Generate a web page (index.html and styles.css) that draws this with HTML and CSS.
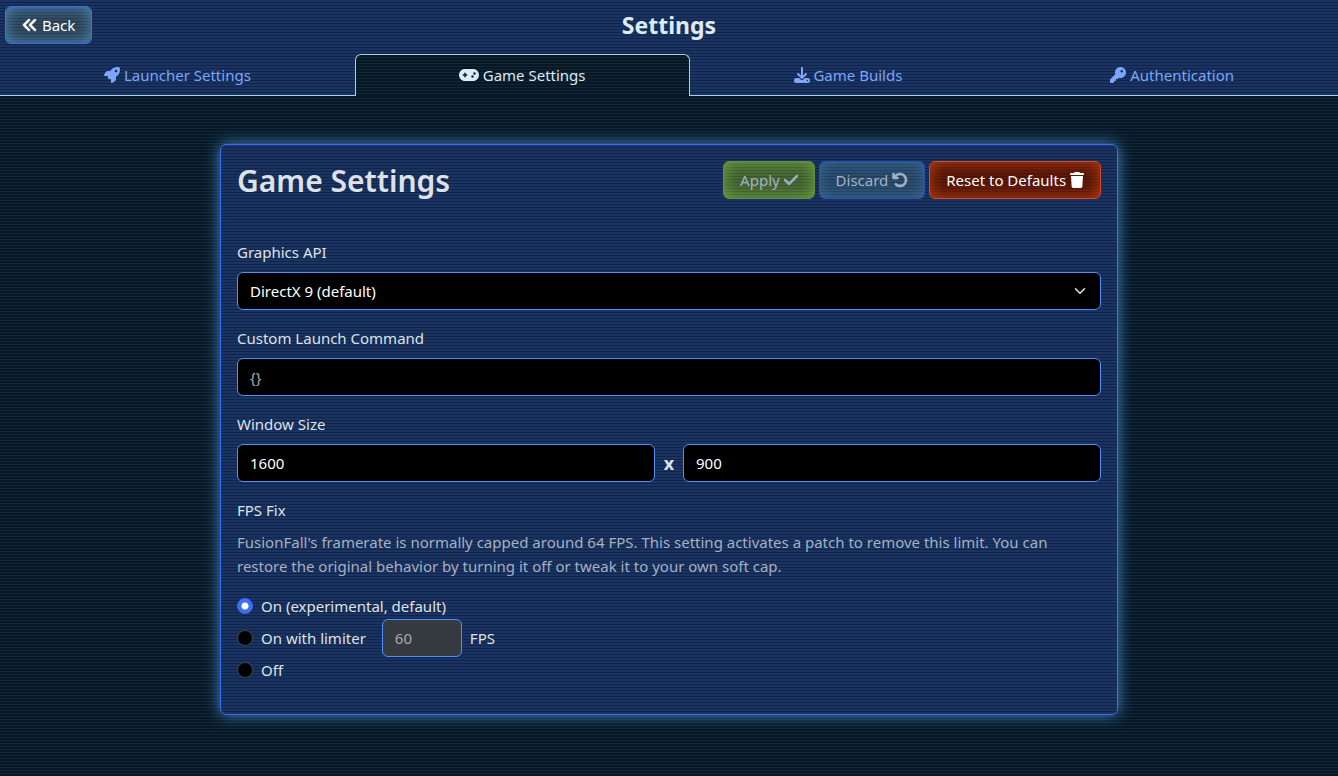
FILE: index.html
```html
<!DOCTYPE html>
<html lang="en">
<head>
<meta charset="utf-8">
<meta name="viewport" content="width=device-width, initial-scale=1">
<title>Settings</title>
<link rel="stylesheet" href="styles.css">
</head>
<body>
<header class="top">
  <div class="titlebar">
    <button class="btn btn-primary" type="button"><svg class="icon icon-bold" viewBox="0 0 512 512" aria-hidden="true"><path d="M41.400 233.400c-12.500 12.500-12.500 32.800 0 45.300l160 160c12.500 12.500 32.800 12.500 45.300 0s12.500-32.800 0-45.300L109.300 256 246.600 118.600c12.500-12.500 12.500-32.800 0-45.300s-32.800-12.500-45.300 0l-160 160zm192 0c-12.500 12.500-12.500 32.800 0 45.300l160 160c12.500 12.500 32.800 12.500 45.300 0s12.500-32.800 0-45.300L301.300 256 438.600 118.600c12.500-12.500 12.500-32.800 0-45.300s-32.800-12.500-45.300 0l-160 160z"/></svg> Back</button>
    <h1 class="page-title">Settings</h1>
  </div>
  <nav class="tabs">
    <a class="tab" href="#launcher"><svg class="icon" viewBox="0 0 512 512" aria-hidden="true"><path fill-rule="evenodd" d="M156.600 384.900 125.700 354c-8.500-8.500-11.500-20.800-7.700-32.200 3-8.900 7-20.500 11.800-33.800H24c-8.600 0-16.600-4.600-20.900-12.100s-4.200-16.700.2-24.100l52.500-88.500c13-21.900 36.500-35.300 61.900-35.300h82.300c2.400-4 4.800-7.700 7.200-11.300C289.100-4.100 411.100-8.100 483.900 5.300c11.600 2.100 20.600 11.200 22.800 22.800 13.400 72.900 9.300 194.800-111.400 276.700-3.500 2.400-7.300 4.800-11.300 7.200v82.300c0 25.400-13.400 49-35.300 61.900l-88.500 52.500c-7.400 4.400-16.600 4.500-24.100.2s-12.100-12.200-12.100-20.900V380.800c-14.100 4.900-26.400 8.900-35.700 11.900-11.200 3.600-23.400.5-31.800-7.800zM384 168a40 40 0 1 0 0-80 40 40 0 1 0 0 80z"/></svg> Launcher Settings</a>
    <a class="tab active" href="#game" aria-current="page"><svg class="icon" viewBox="0 0 640 512" aria-hidden="true"><path fill-rule="evenodd" d="M192 64C86 64 0 150 0 256s86 192 192 192h256c106 0 192-86 192-192S554 64 448 64H192zm304 104a40 40 0 1 1 0 80 40 40 0 1 1 0-80zM392 304a40 40 0 1 1 80 0 40 40 0 1 1-80 0zM168 200c0-13.300 10.700-24 24-24s24 10.700 24 24v32h32c13.300 0 24 10.700 24 24s-10.700 24-24 24h-32v32c0 13.300-10.700 24-24 24s-24-10.700-24-24v-32h-32c-13.300 0-24-10.700-24-24s10.700-24 24-24h32v-32z"/></svg> Game Settings</a>
    <a class="tab" href="#builds"><svg class="icon" viewBox="0 0 512 512" aria-hidden="true"><path fill-rule="evenodd" d="M288 32c0-17.700-14.300-32-32-32s-32 14.300-32 32v242.700l-73.400-73.400c-12.500-12.500-32.800-12.500-45.300 0s-12.500 32.800 0 45.300l128 128c12.500 12.500 32.800 12.500 45.300 0l128-128c12.500-12.500 12.500-32.800 0-45.300s-32.800-12.500-45.300 0L288 274.700V32zM64 352c-35.300 0-64 28.700-64 64v32c0 35.300 28.700 64 64 64h384c35.300 0 64-28.700 64-64v-32c0-35.300-28.700-64-64-64H346.500l-45.300 45.300c-25 25-65.500 25-90.500 0L165.500 352H64zm368 56a24 24 0 1 1 0 48 24 24 0 1 1 0-48z"/></svg> Game Builds</a>
    <a class="tab" href="#auth"><svg class="icon" viewBox="0 0 512 512" aria-hidden="true"><path fill-rule="evenodd" d="M336 352c97.200 0 176-78.800 176-176S433.200 0 336 0 160 78.800 160 176c0 18.700 2.900 36.800 8.300 53.700L7 391c-4.500 4.500-7 10.600-7 17v80c0 13.300 10.700 24 24 24h80c13.300 0 24-10.700 24-24v-40h40c13.300 0 24-10.700 24-24v-40h40c6.400 0 12.500-2.500 17-7l33.300-33.300c16.900 5.400 35 8.300 53.700 8.300zM376 96a40 40 0 1 1 0 80 40 40 0 1 1 0-80z"/></svg> Authentication</a>
  </nav>
</header>
<main class="content">
  <form class="card">
    <div class="card-head">
      <h2 class="card-title">Game Settings</h2>
      <div class="actions">
        <button class="btn btn-success" type="button" disabled>Apply <svg class="icon icon-bold" viewBox="0 0 448 512" aria-hidden="true"><path d="M438.600 105.400c12.500 12.500 12.500 32.800 0 45.300l-256 256c-12.500 12.500-32.800 12.500-45.300 0l-128-128c-12.500-12.500-12.500-32.800 0-45.300s32.800-12.500 45.300 0L160 338.700l233.400-233.300c12.500-12.500 32.800-12.500 45.300 0z"/></svg></button>
        <button class="btn btn-primary" type="button" disabled>Discard <svg class="icon icon-bold" viewBox="0 0 512 512" aria-hidden="true"><path d="M125.700 160H176c17.700 0 32 14.300 32 32s-14.300 32-32 32H48c-17.700 0-32-14.300-32-32V64c0-17.700 14.300-32 32-32s32 14.300 32 32v51.200l17.600-17.600c87.500-87.500 229.300-87.500 316.800 0s87.500 229.300 0 316.800-229.300 87.500-316.800 0c-12.500-12.500-12.500-32.800 0-45.300s32.800-12.500 45.300 0c62.500 62.500 163.800 62.500 226.300 0s62.500-163.800 0-226.300-163.800-62.500-226.300 0L125.700 160z"/></svg></button>
        <button class="btn btn-danger" type="button">Reset to Defaults <svg class="icon" viewBox="0 0 448 512" aria-hidden="true"><path d="M135.200 17.700 128 32H32C14.300 32 0 46.300 0 64s14.300 32 32 32h384c17.700 0 32-14.300 32-32s-14.300-32-32-32h-96l-7.200-14.300C307.400 6.800 296.300 0 284.200 0H163.800c-12.100 0-23.200 6.800-28.600 17.700zM416 128H32l21.200 339c1.600 25.300 22.600 45 47.900 45h245.800c25.300 0 46.300-19.700 47.900-45L416 128z"/></svg></button>
      </div>
    </div>
    <hr class="rule">
    <div class="field">
      <label class="label" for="api">Graphics API</label>
      <select class="control select" id="api"><option>DirectX 9 (default)</option></select>
    </div>
    <div class="field">
      <label class="label" for="command">Custom Launch Command</label>
      <input class="control" id="command" type="text" placeholder="{}">
    </div>
    <div class="field">
      <label class="label" for="width">Window Size</label>
      <div class="size-row">
        <input class="control" id="width" type="text" value="1600">
        <span class="times">x</span>
        <input class="control" type="text" value="900" aria-label="Window height">
      </div>
    </div>
    <fieldset class="group">
      <legend class="label">FPS Fix</legend>
      <p class="hint">FusionFall's framerate is normally capped around 64 FPS. This setting activates a patch to remove this limit. You can restore the original behavior by turning it off or tweak it to your own soft cap.</p>
      <div class="choice"><input class="radio" type="radio" name="fps" id="on" checked><label for="on">On (experimental, default)</label></div>
      <div class="choice"><input class="radio" type="radio" name="fps" id="limit"><label for="limit">On with limiter</label>
        <input class="control limit" id="cap" type="text" value="60" disabled><label for="cap">FPS</label></div>
      <div class="choice"><input class="radio" type="radio" name="fps" id="off"><label for="off">Off</label></div>
    </fieldset>
  </form>
</main>
</body>
</html>
```
FILE: styles.css
```css
* { box-sizing: border-box; }

body {
  margin: 0;
  min-height: 100vh;
  background: repeating-linear-gradient(#081820 0 2px, #10253f 2px 3px);
  color: #dee2e6;
  font: 15px/24px "Noto Sans", "Open Sans", sans-serif;
}

button, input, select { font: inherit; }

.icon {
  width: auto;
  height: 16px;
  fill: currentColor;
  vertical-align: -2px;
}

.icon-bold {
  stroke: currentColor;
  stroke-width: 20px;
}

.top {
  background: repeating-linear-gradient(#193363 0 2px, #122448 2px 3px);
}

.titlebar {
  display: grid;
  grid-template-columns: 1fr auto 1fr;
  align-items: center;
  padding: 6px 5px 10px;
}

.titlebar .btn { justify-self: start; }

.page-title {
  margin: 0;
  color: #dcebf5;
  font-size: 23px;
  font-weight: 700;
  line-height: 32px;
}

.btn {
  height: 38px;
  padding: 0 16px;
  border: 1px solid #3d6df0;
  border-radius: 6px;
  color: #fff;
  white-space: nowrap;
}

.btn-primary {
  background: repeating-linear-gradient(#ffffff08 0 2px, #00000022 2px 3px), #2a4258;
  box-shadow: inset 0 0 16px #4d8bb8;
}

.btn-success {
  border-color: #5f9440;
  background: repeating-linear-gradient(#ffffff08 0 2px, #00000022 2px 3px), #3f622f;
  box-shadow: inset 0 0 16px #76a444;
}

.btn-danger {
  border-color: #d04a32;
  background: repeating-linear-gradient(#ffffff06 0 2px, #00000022 2px 3px), #551304;
  box-shadow: inset 0 0 16px #c33f12;
}

.btn:disabled { color: #a4b1c4; }

.btn-primary:disabled {
  border-color: #2b53b4;
  background-color: #244568;
  box-shadow: inset 0 0 16px #386a96;
}

.tabs {
  display: flex;
  border-bottom: 1px solid #a9d0e4;
}

.tab {
  flex: 1 1 auto;
  margin-bottom: -1px;
  padding: 8px 16px;
  border: 1px solid transparent;
  border-bottom: 0;
  border-radius: 6px 6px 0 0;
  color: #7da5fa;
  text-align: center;
  text-decoration: none;
}

.tab.active {
  padding-bottom: 9px;
  border-color: #a9d0e4;
  background: repeating-linear-gradient(#081820 0 2px, #10253f 2px 3px);
  color: #dcebf5;
}

.content { padding: 48px 16px; }

.card {
  max-width: 898px;
  margin: 0 auto;
  padding: 16px 16px 24px;
  border: 1px solid #3d6df0;
  border-radius: 6px;
  background: repeating-linear-gradient(#193363 0 2px, #122448 2px 3px);
  box-shadow: 0 0 16px #4088c8;
}

.card-head {
  display: flex;
  align-items: flex-start;
  justify-content: space-between;
}

.card-title {
  margin: 0;
  font-size: 30px;
  font-weight: 600;
  line-height: 40px;
}

.actions {
  display: flex;
  gap: 4px;
}

.rule {
  margin: 22px 0 16px;
  border: 0;
  border-top: 1px solid #19336c;
}

.field { margin-bottom: 16px; }

.label {
  display: block;
  margin-bottom: 8px;
  padding: 0;
}

.control {
  display: block;
  width: 100%;
  height: 38px;
  padding: 0 12px;
  border: 1px solid #4f8ff7;
  border-radius: 6px;
  background: #000;
  color: #fff;
}

.control::placeholder { color: #a9a9a9; opacity: 1; }

.select {
  appearance: none;
  background: #000 url("data:image/svg+xml,%3Csvg xmlns='http://www.w3.org/2000/svg' viewBox='0 0 16 16'%3E%3Cpath fill='none' stroke='%23dee2e6' stroke-linecap='round' stroke-linejoin='round' stroke-width='2' d='m2 5 6 6 6-6'/%3E%3C/svg%3E") no-repeat right 14px center / 12px 12px;
}

.size-row {
  display: flex;
  align-items: center;
  gap: 8px;
}

.size-row .control { flex: 1; min-width: 0; }

.times {
  width: 12px;
  font-size: 18px;
  font-weight: 700;
  text-align: center;
}

.group {
  margin: 0;
  padding: 0;
  border: 0;
}

.hint {
  margin: 0 0 16px;
  color: #a6b0c0;
}

.choice {
  display: flex;
  align-items: center;
  height: 24px;
  margin-bottom: 8px;
}

.radio {
  appearance: none;
  width: 16px;
  height: 16px;
  margin: 0 8px 0 0;
  border: 1px solid #40464d;
  border-radius: 50%;
  background: #000;
}

.radio:checked {
  border-color: #3d6df5;
  background: radial-gradient(circle, #fff 0 3px, #3d6df5 4px);
}

.limit {
  width: 80px;
  margin: 0 8px 0 16px;
}

.limit:disabled { background: #343a40; color: #a9a9a9; }
```
